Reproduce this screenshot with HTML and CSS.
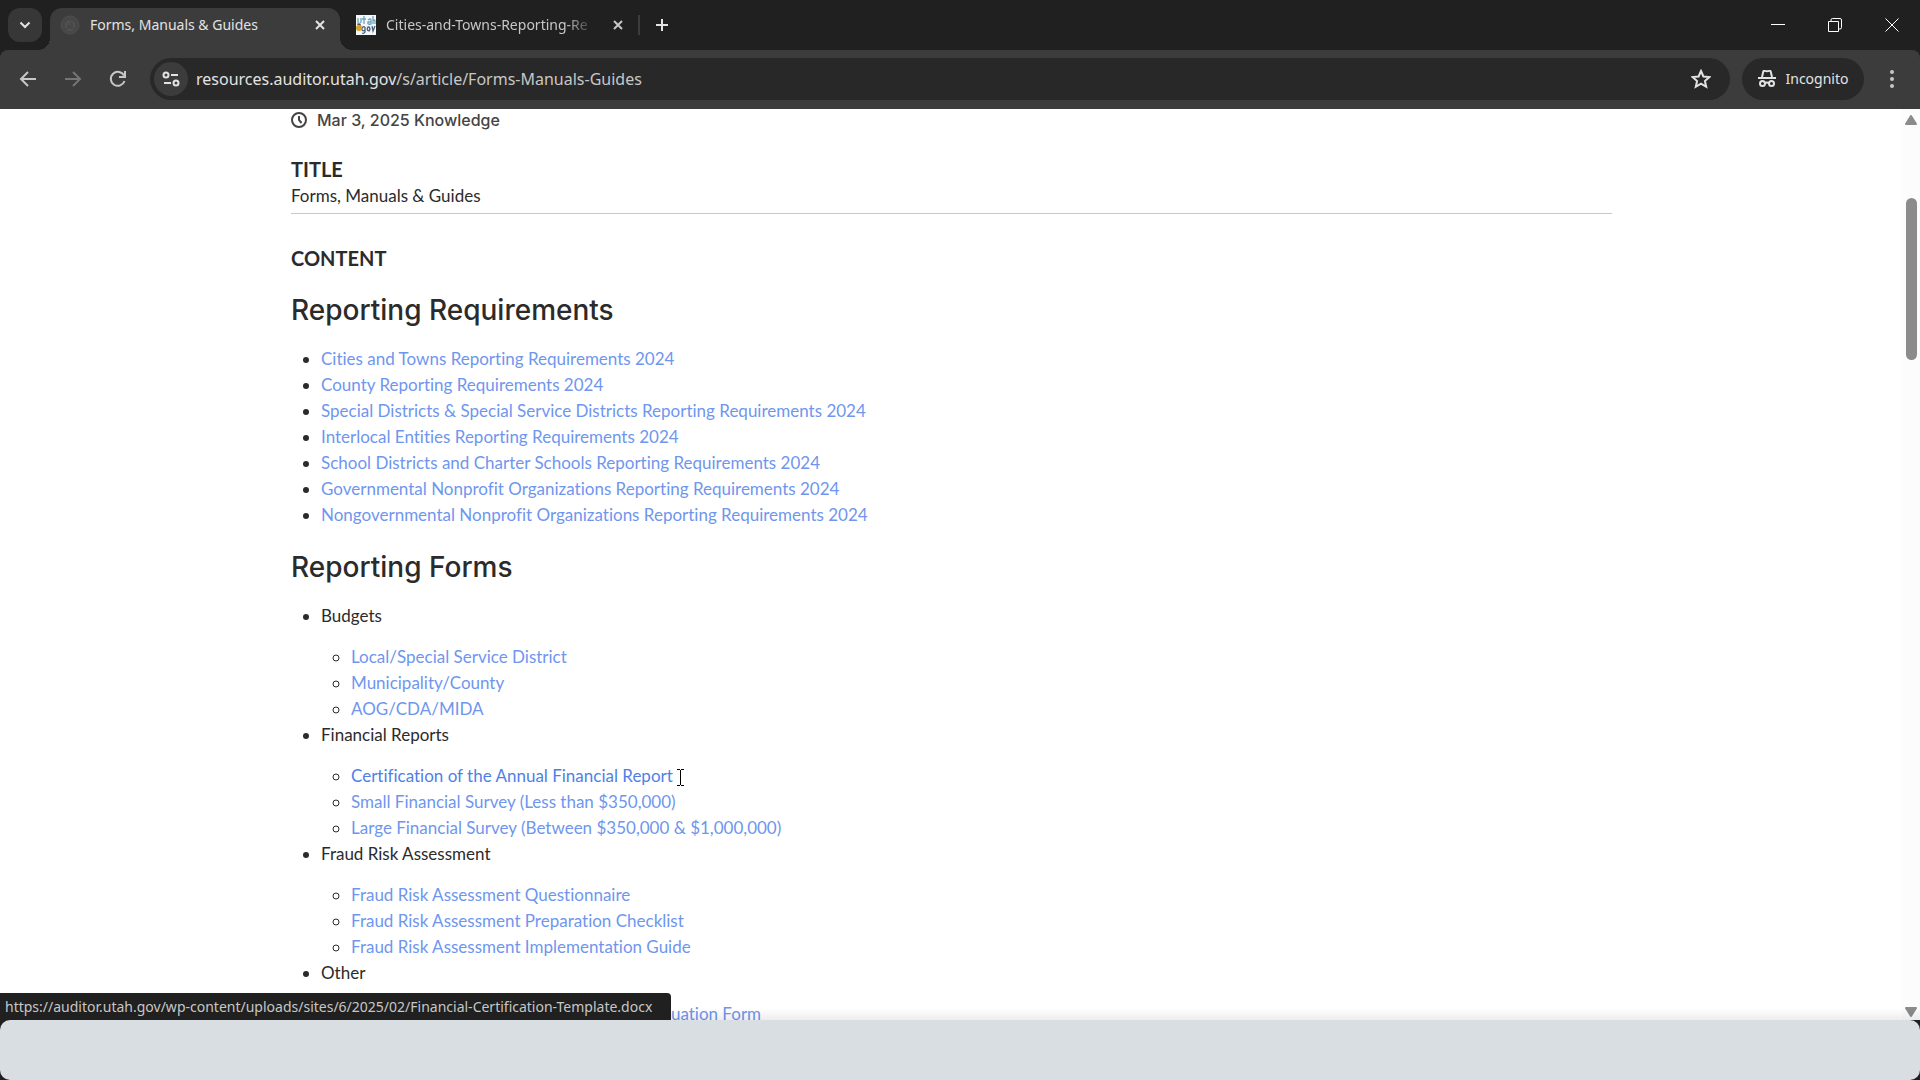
FILE: index.html
```html
<!DOCTYPE html>
<html lang="en">
<head>
    <meta charset="UTF-8">
    <meta name="viewport" content="width=device-width, initial-scale=1.0">
    <title>Forms, Manuals &amp; Guides</title>
    <link rel="stylesheet" href="styles.css">
</head>
<body>

    <header class="browser">
        <div class="tab-strip">
            <button class="tab-search" aria-label="Search tabs">
                <svg width="12" height="8" viewBox="0 0 12 8"><path d="M1.5 1.5L6 6l4.5-4.5" /></svg>
            </button>
            <div class="tab active">
                <svg class="favicon" viewBox="0 0 20 20"><circle cx="10" cy="10" r="9" fill="#474747" stroke="#4e4e4e" /><path d="M6 13V8l3-2v4M11 6l3 2v5M7 15h6" stroke="#5a5a5a" fill="none" /></svg>
                <span class="tab-title">Forms, Manuals &amp; Guides</span>
                <button class="icon-btn" aria-label="Close tab">
                    <svg width="10" height="10" viewBox="0 0 10 10"><path d="M1 1l8 8M9 1L1 9" /></svg>
                </button>
            </div>
            <div class="tab">
                <svg class="favicon" viewBox="0 0 20 20">
                    <path d="M0 0h20v20H0z" fill="#f4f8fa" />
                    <path d="M2 3v4q1 3 3 0V3M8 1v8M6 4h4M12 5q3-2 3 0v4q-4 1-3-2h3M17 1v8M17 6q2-2 2 0v3" stroke="#6fa3bd" stroke-width="1.3" fill="none" />
                    <path d="M9 12q-3-1-3 2t3 1v-3 5q-1 2-3 1M12 12q-2 3 1 4 2-2 0-4zM16 11l1 5 2-5" stroke="#4b5f7c" stroke-width="1.3" fill="none" />
                    <circle cx="3" cy="13" r="3" fill="#d6a228" />
                    <path d="M1 9l4 1" stroke="#4a4022" />
                </svg>
                <span class="tab-title fade">Cities-and-Towns-Reporting-Re</span>
                <button class="icon-btn" aria-label="Close tab">
                    <svg width="10" height="10" viewBox="0 0 10 10"><path d="M1 1l8 8M9 1L1 9" /></svg>
                </button>
            </div>
            <button class="icon-btn new-tab" aria-label="New tab">
                <svg width="14" height="14" viewBox="0 0 14 14"><path d="M7 1v12M1 7h12" /></svg>
            </button>
            <div class="window-controls">
                <button aria-label="Minimize"><svg width="14" height="14" viewBox="0 0 14 14"><path d="M0 6.5h14" /></svg></button>
                <button aria-label="Restore"><svg width="14" height="14" viewBox="0 0 14 14"><path d="M.5 3.5h10v10H.5zM3 3V2q0-1.500 1.500-1.500H12q1.500 0 1.500 1.500v7.500q0 1.500-1.500 1.500h-1" /></svg></button>
                <button aria-label="Close"><svg width="14" height="14" viewBox="0 0 14 14"><path d="M.5.5l13 13M13.500.5l-13 13" /></svg></button>
            </div>
        </div>

        <div class="toolbar">
            <button class="nav-btn" aria-label="Back"><svg width="18" height="18" viewBox="0 0 18 18"><path d="M17 9H2M9 2L2 9l7 7" /></svg></button>
            <button class="nav-btn disabled" aria-label="Forward" disabled><svg width="18" height="18" viewBox="0 0 18 18"><path d="M1 9h15M9 2l7 7-7 7" /></svg></button>
            <button class="nav-btn" aria-label="Reload"><svg width="18" height="18" viewBox="0 0 18 18"><path d="M15 5.500A7 7 0 1 0 15.500 11M16 1v6h-6" /></svg></button>
            <div class="address">
                <button class="site-info" aria-label="Site information">
                    <svg width="18" height="16" viewBox="0 0 18 16"><circle cx="4" cy="4" r="2.500" /><path d="M9 4h7M2 12h7" /><circle cx="14" cy="12" r="2.500" /></svg>
                </button>
                <div class="url">resources.auditor.utah.gov<span>/s/article/Forms-Manuals-Guides</span></div>
                <button class="icon-btn star" aria-label="Bookmark this tab">
                    <svg width="20" height="20" viewBox="0 0 20 20"><path d="M10 2l2.400 5.500 6 .5-4.500 4 1.300 5.800L10 14.700l-5.200 3.100L6.100 12 1.600 8l6-.5z" /></svg>
                </button>
            </div>
            <button class="incognito">
                <svg width="18" height="18" viewBox="0 0 18 18"><path d="M4 7l1.300-5.500q.3-1 1.300-.6 2.400.8 4.800 0 1-.4 1.300.6L14 7M0 8h18" /><circle cx="4.500" cy="13.500" r="2.500" /><circle cx="13.500" cy="13.500" r="2.500" /><path d="M7 13q2-1 4 0" /></svg>
                Incognito
            </button>
            <button class="menu-btn" aria-label="Menu">
                <svg width="4" height="18" viewBox="0 0 4 18"><circle cx="2" cy="2" r="2" /><circle cx="2" cy="9" r="2" /><circle cx="2" cy="16" r="2" /></svg>
            </button>
        </div>
    </header>

    <div class="viewport">
        <main class="article">
            <p class="meta">
                <svg width="16" height="16" viewBox="0 0 16 16"><circle cx="8" cy="8" r="7" /><path d="M8 4v4l2.500 3" /></svg>
                Mar 3, 2025 Knowledge
            </p>

            <h3>TITLE</h3>
            <p class="title-value">Forms, Manuals &amp; Guides</p>

            <h3>CONTENT</h3>
            <h2>Reporting Requirements</h2>
            <ul>
                <li><a href="#">Cities and Towns Reporting Requirements 2024</a></li>
                <li><a href="#">County Reporting Requirements 2024</a></li>
                <li><a href="#">Special Districts &amp; Special Service Districts Reporting Requirements 2024</a></li>
                <li><a href="#">Interlocal Entities Reporting Requirements 2024</a></li>
                <li><a href="#">School Districts and Charter Schools Reporting Requirements 2024</a></li>
                <li><a href="#">Governmental Nonprofit Organizations Reporting Requirements 2024</a></li>
                <li><a href="#">Nongovernmental Nonprofit Organizations Reporting Requirements 2024</a></li>
            </ul>

            <h2>Reporting Forms</h2>
            <ul>
                <li>Budgets
                    <ul>
                        <li><a href="#">Local/Special Service District</a></li>
                        <li><a href="#">Municipality/County</a></li>
                        <li><a href="#">AOG/CDA/MIDA</a></li>
                    </ul>
                </li>
                <li>Financial Reports
                    <ul>
                        <li><a class="hovered" href="#">Certification of the Annual Financial Report<svg class="cursor" width="7" height="17" viewBox="0 0 7 17"><path d="M0 .5h3M4 .5h3M3.500 1v15M0 16.500h3M4 16.500h3" /></svg></a></li>
                        <li><a href="#">Small Financial Survey (Less than $350,000)</a></li>
                        <li><a href="#">Large Financial Survey (Between $350,000 &amp; $1,000,000)</a></li>
                    </ul>
                </li>
                <li>Fraud Risk Assessment
                    <ul>
                        <li><a href="#">Fraud Risk Assessment Questionnaire</a></li>
                        <li><a href="#">Fraud Risk Assessment Preparation Checklist</a></li>
                        <li><a href="#">Fraud Risk Assessment Implementation Guide</a></li>
                    </ul>
                </li>
                <li>Other
                    <ul>
                        <li><a href="#">Internal Controls Questionnaire &amp; Self-Evaluation Form</a></li>
                    </ul>
                </li>
            </ul>
        </main>

        <div class="scrollbar">
            <svg width="12" height="10" viewBox="0 0 12 10"><path d="M6 1l5 8H1z" /></svg>
            <div class="track"><div class="thumb"></div></div>
            <svg width="12" height="10" viewBox="0 0 12 10"><path d="M6 9l5-8H1z" /></svg>
        </div>

        <div class="status">https://auditor.utah.gov/wp-content/uploads/sites/6/2025/02/Financial-Certification-Template.docx</div>
    </div>

    <footer class="taskbar"><div></div></footer>

</body>
</html>
```

FILE: styles.css
```css
* { box-sizing: border-box; }
body { margin: 0; height: 100vh; display: flex; flex-direction: column; overflow: hidden; background-color: #fff; color: #2b2b2b; font-family: Lato, sans-serif; font-size: 17px; line-height: 26px; font-variant-ligatures: none; }
button { border: none; padding: 0; background: none; color: inherit; font: inherit; display: flex; align-items: center; justify-content: center; }
svg { flex: none; }

/* Browser chrome */
.browser { flex: none; background-color: #202020; color: #e3e3e3; font-family: "Noto Sans", sans-serif; font-size: 14px; line-height: 20px; }
.browser button svg { fill: none; stroke: currentColor; stroke-width: 2; }
.tab-strip { height: 50px; display: flex; align-items: flex-end; padding-left: 8px; }
.tab-search { width: 34px; height: 34px; margin-bottom: 8px; border-radius: 12px; background-color: #373737; }
.tab { position: relative; height: 42px; width: 298px; padding: 0 8px 8px 16px; display: flex; align-items: center; gap: 10px; color: #c7c7c7; }
.tab.active { width: 290px; margin: 0 0 0 8px; padding-left: 10px; background-color: #3c3c3c; border-radius: 12px 12px 0 0; color: #e3e3e3; }
.tab.active::before, .tab.active::after { content: ""; position: absolute; bottom: 0; width: 12px; height: 12px; }
.tab.active::before { left: -12px; background: radial-gradient(circle at 0 0, #202020 12px, #3c3c3c 12px); }
.tab.active::after { right: -12px; background: radial-gradient(circle at 100% 0, #202020 12px, #3c3c3c 12px); }
.favicon { width: 20px; height: 20px; flex: none; }
.tab-title { flex: 1; min-width: 0; white-space: nowrap; overflow: hidden; }
.fade { -webkit-mask-image: linear-gradient(to right, #000 85%, transparent); mask-image: linear-gradient(to right, #000 85%, transparent); }
.icon-btn { width: 24px; height: 24px; flex: none; }
.new-tab { width: 46px; height: 20px; margin-bottom: 15px; border-left: 2px solid #3c3c3c; }
.window-controls { margin-left: auto; display: flex; align-self: stretch; }
.window-controls button { width: 57px; }
.window-controls button svg { stroke: #fff; stroke-width: 1; }
.toolbar { height: 59px; padding: 0 8px 1px; display: flex; align-items: center; background-color: #3c3c3c; border-radius: 8px 8px 0 0; }
.nav-btn { width: 40px; height: 40px; margin-right: 5px; color: #c7c7c7; }
.nav-btn.disabled { color: #757575; }
.address { flex: 1; height: 42px; margin: 0 12px 0 7px; padding: 0 17px 0 4px; border-radius: 21px; background-color: #282828; display: flex; align-items: center; }
.site-info { width: 34px; height: 34px; border-radius: 17px; background-color: #3c3c3c; }
.url { flex: 1; margin-left: 8px; font-size: 16px; }
.url span { color: #c7c7c7; }
.incognito { height: 42px; width: 122px; gap: 10px; border-radius: 21px; background-color: #282828; }
.menu-btn { width: 56px; height: 40px; margin-right: -8px; }
.browser .menu-btn svg { fill: #c7c7c7; stroke: none; }

/* Page */
.viewport { position: relative; flex: 1; min-height: 0; display: flex; overflow: hidden; }
.viewport::after { content: ""; position: absolute; left: 0; right: 0; bottom: 0; height: 12px; background: linear-gradient(transparent, rgba(0,0,0,0.07)); }
.article { flex: 1; padding: 0 290px 0 291px; }
.meta { margin: 0; height: 22px; display: flex; align-items: center; gap: 10px; font-family: Inter, sans-serif; font-size: 16px; font-weight: 500; color: #444; }
.meta svg { fill: none; stroke: #444; stroke-width: 2; }
h3 { margin: 25px 0 1px; font-size: 20px; line-height: 26px; font-weight: 700; }
.title-value { margin: 0 0 31px; padding-bottom: 4px; border-bottom: 1px solid #c9c9c9; }
h2 { margin: 23px 0 20px; font-family: Inter, sans-serif; font-size: 28px; line-height: 32px; font-weight: 500; }
ul { margin: 0; padding-left: 30px; }
ul ul { margin-top: 15px; }
a { color: #6f96ee; text-decoration: none; }
.hovered { position: relative; color: #4f7fe6; }
.cursor { position: absolute; left: 100%; top: 4px; margin-left: 4px; stroke: #000; }
.scrollbar { width: 18px; padding: 6px 0 3px; display: flex; flex-direction: column; align-items: center; background-color: #fcfcfc; }
.scrollbar svg { fill: #8b8b8b; stroke: #8b8b8b; stroke-linejoin: round; stroke-width: 2; }
.track { flex: 1; padding-top: 73px; }
.thumb { width: 11px; height: 20%; border-radius: 6px; background-color: #8b8b8b; }
.status { position: absolute; left: 0; bottom: 0; z-index: 1; height: 27px; padding: 0 19px 0 5px; border-top-right-radius: 4px; background-color: #202020; color: #c7c7c7; font-family: "Noto Sans", sans-serif; font-size: 14px; line-height: 27px; white-space: nowrap; }
.taskbar { flex: none; height: 60px; background-color: #202020; }
.taskbar div { height: 100%; border-radius: 10px; background-color: #d9dee2; }
```
